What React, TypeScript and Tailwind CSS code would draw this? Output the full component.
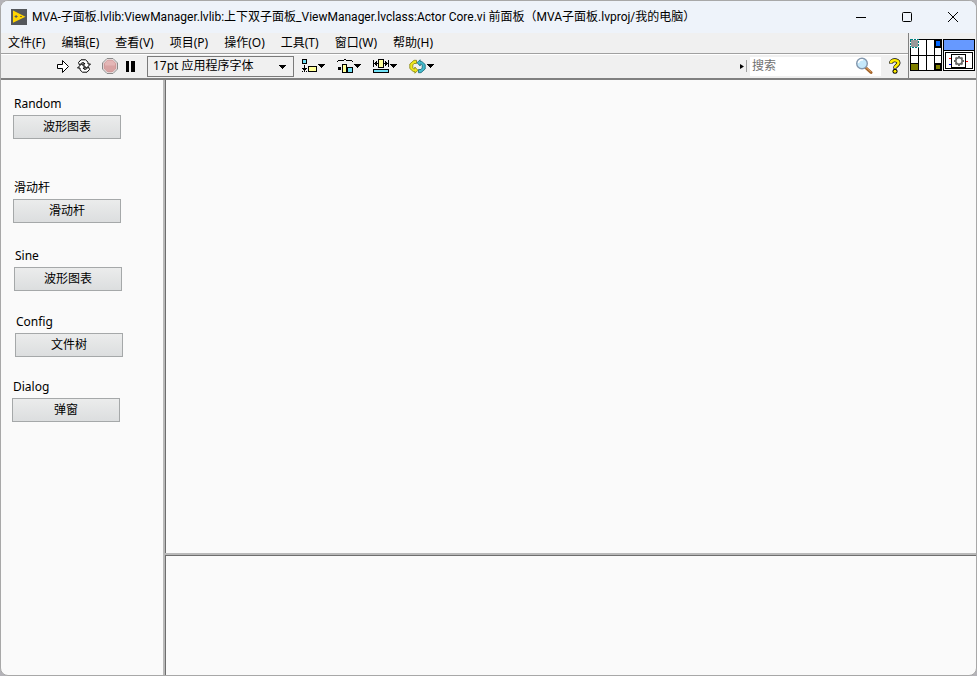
import React, { useState } from 'react';

const MENUS = ['文件(F)', '编辑(E)', '查看(V)', '项目(P)', '操作(O)', '工具(T)', '窗口(W)', '帮助(H)'];

const VIEWS = [
  { id: 'random', label: 'Random', action: '波形图表', place: 'ml-3 mt-4' },
  { id: 'slider', label: '滑动杆', action: '滑动杆', place: 'ml-3 mt-[41px]' },
  { id: 'sine', label: 'Sine', action: '波形图表', place: 'ml-[13px] mt-[25px]' },
  { id: 'config', label: 'Config', action: '文件树', place: 'ml-[14px] mt-[23px]' },
  { id: 'dialog', label: 'Dialog', action: '弹窗', place: 'ml-[11px] mt-[22px]' },
];

const Caret: React.FC = () => (
  <svg width="7" height="4" viewBox="0 0 7 4" shapeRendering="crispEdges">
    <path d="M0 0h7v1H6v1H5v1H4v1H3V3H2V2H1V1H0z" fill="#000" />
  </svg>
);

const AppIcon: React.FC = () => (
  <svg width="16" height="16" viewBox="0 0 16 16">
    <rect width="16" height="16" fill="#55585c" />
    <path d="M2 1.600L14.500 7.700L2 13.800z" fill="#ffd500" />
    <path d="M3.600 7.500h3M5.100 6v3" stroke="#55585c" strokeWidth="1" />
    <path d="M9 7.500h2" stroke="#8a7a20" strokeWidth="1" />
  </svg>
);

const RunIcon: React.FC = () => (
  <svg width="12" height="13" viewBox="0 0 12 13">
    <path d="M.5 4.500h5v-4l6 6-6 6v-4h-5z" fill="#fff" stroke="#000" />
  </svg>
);

const RunLoopIcon: React.FC = () => (
  <svg width="16" height="14" viewBox="0 0 16 14" strokeLinejoin="miter">
    <path d="M2.500 3.500L5 .8H9.500L12 3.200V5H14.500L10.500 9 6.500 5H9L8 3.800H6L3.500 6z" fill="#fff" stroke="#000" />
    <path d="M13.500 10.500L11 13.200H6.500L4 10.800V9H1.500L5.500 5 9.500 9H7L8 10.200H10L12.500 8z" fill="#fff" stroke="#000" />
  </svg>
);

const AbortIcon: React.FC = () => (
  <svg width="16" height="16" viewBox="0 0 16 16">
    <path d="M5 .5h6L15.500 5v6L11 15.500H5L.5 11V5z" fill="#f4f0f0" stroke="#8a8a8a" />
    <path d="M5.500 2h5L14 5.500v5L10.500 14h-5L2 10.500v-5z" fill="#d9a3a3" stroke="#c08c8c" strokeWidth=".6" />
    <path d="M5.500 2.500h5L13 5.500v2H3v-2z" fill="#e4b6b6" />
  </svg>
);

const PauseIcon: React.FC = () => (
  <svg width="9" height="11" viewBox="0 0 9 11" shapeRendering="crispEdges">
    <path d="M0 0h3v11H0zM5 0h4v11H5z" fill="#000" />
  </svg>
);

const AlignIcon: React.FC = () => (
  <svg width="15" height="14" viewBox="0 0 15 14" shapeRendering="crispEdges">
    <path d="M0 0h5v5H0z" fill="#000" />
    <path d="M1 1h3v3H1z" fill="#6fe0f5" />
    <path d="M2 6h1v4H2zM0 9h5v1H0zM1 10h3v1H1zM2 11h1v1H2zM0 12h1v1H0zM2 12h1v1H2zM4 12h1v1H4z" fill="#000" />
    <path d="M6 7h9v6H6z" fill="#000" />
    <path d="M7 8h7v4H7z" fill="#ffff99" />
  </svg>
);

const DistributeIcon: React.FC = () => (
  <svg width="16" height="14" viewBox="0 0 16 14" shapeRendering="crispEdges">
    <path d="M0 2h1v1H0zM1 1h6v1H1zM7 0h2v1H7zM9 1h6v1H9zM15 2h1v1h-1z" fill="#000" />
    <path d="M1 8h3v3H1zM5 5h5v9H5zM10 8h6v6h-6z" fill="#000" />
    <path d="M6 6h3v7H6z" fill="#ffff99" />
    <path d="M11 9h4v4h-4z" fill="#6fe0f5" />
  </svg>
);

const ResizeIcon: React.FC = () => (
  <svg width="16" height="14" viewBox="0 0 16 14" shapeRendering="crispEdges">
    <path d="M0 1h1v7H0zM15 1h1v7h-1zM1 4h4v1H1zM11 4h4v1h-4zM2 3h1v3H2zM3 2h1v5H3zM13 3h1v3h-1zM12 2h1v5h-1z" fill="#000" />
    <path d="M5 0h6v9H5zM0 9h16v5H0z" fill="#000" />
    <path d="M6 1h4v7H6z" fill="#ffff99" />
    <path d="M1 10h14v3H1z" fill="#6fe0f5" />
    <path d="M0 9h16v1H0z" fill="#f0f0f0" />
    <path d="M0 10h16v1H0z" fill="#000" />
  </svg>
);

const ReorderIcon: React.FC = () => (
  <svg width="17" height="15" viewBox="0 0 17 15">
    <path d="M7.500 1.300H5L.8 5v4.500l3.400 3h1.600v1.700L9 11.300 5.800 8v1.800H4.500L3.800 9V6L5 4.500h2.500z" fill="#efe81c" stroke="#85820f" strokeWidth=".8" />
    <path d="M9.500 13.700H12L16.200 10V5.500l-3.400-3h-1.600V.8L8 3.700 11.200 7V5.200h1.300l.7.800v3L12 10.500H9.500z" fill="#45bccd" stroke="#156575" strokeWidth=".8" />
  </svg>
);

const SearchIcon: React.FC = () => (
  <svg width="18" height="18" viewBox="0 0 18 18">
    <path d="M10.500 10.500l5.500 5" stroke="#a5652a" strokeWidth="3" strokeLinecap="round" />
    <path d="M10.500 10l5 4.500" stroke="#e0a060" strokeWidth="1" strokeLinecap="round" />
    <circle cx="7" cy="6.500" r="5.300" fill="#c5e8fa" stroke="#8497ad" strokeWidth="1.400" />
    <path d="M3.500 6a3.500 3.500 0 0 1 4.500-3" stroke="#fff" strokeWidth="1.500" fill="none" />
  </svg>
);

const HelpIcon: React.FC = () => (
  <svg width="12" height="16" viewBox="0 0 12 16">
    <path d="M2 5.400C2 1.400 9.500 1.200 9.500 5 9.500 7.400 6 7.400 6 10.500" fill="none" stroke="#000" strokeWidth="4" />
    <circle cx="6" cy="13.300" r="2.500" fill="#000" />
    <path d="M2 5C2 1.400 9.500 1.200 9.500 5 9.500 7.400 6 7.400 6 10" fill="none" stroke="#ffee00" strokeWidth="2.600" />
    <circle cx="6" cy="13.300" r="1.500" fill="#ffee00" />
  </svg>
);

const ConnectorPane: React.FC = () => (
  <svg width="32" height="32" viewBox="0 0 32 32" shapeRendering="crispEdges">
    <rect width="32" height="32" fill="#000" />
    <path d="M1 9h7v7H1zM1 17h7v7H1zM9 1h7v15H9zM9 17h7v14H9zM17 1h7v15h-7zM17 17h7v14h-7zM25 9h6v7h-6zM25 17h6v7h-6z" fill="#fff" />
    <rect width="9" height="9" fill="#fff" />
    <rect x="1" y="1" width="7" height="7" fill="#999" />
    <rect x=".5" y=".5" width="8" height="8" fill="none" stroke="#008080" strokeDasharray="2 1" />
    <rect x="26" y="2" width="4" height="5" fill="#0066ff" />
    <rect x="1" y="25" width="7" height="6" fill="#808000" />
    <rect x="26" y="26" width="4" height="4" fill="#808000" />
  </svg>
);

const ViIcon: React.FC = () => (
  <svg width="32" height="32" viewBox="0 0 32 32" shapeRendering="crispEdges">
    <rect width="32" height="32" fill="#000" />
    <rect x="1" y="1" width="30" height="10" fill="#6699ff" />
    <rect x="1" y="12" width="30" height="19" fill="#fff" />
    <rect x="2.500" y="13.500" width="27" height="16" fill="#fff" stroke="#000" />
    <rect x="8.500" y="15.500" width="14" height="13" fill="#fff" stroke="#000" />
    <path d="M6 19h2v1H6zM23 22h2v1h-2z" fill="#f00" />
    <path d="M6 25h2v1H6z" fill="#00f" />
    <g shapeRendering="auto" stroke="#666" fill="none">
      <circle cx="16" cy="22" r="3.200" strokeWidth="1.600" />
      <path d="M16 17v2M16 25v2M11 22h2M19 22h2M12.500 18.500l1.400 1.400M18.100 24.100l1.400 1.400M19.500 18.500l-1.400 1.400M13.900 24.100l-1.400 1.400" strokeWidth="1.900" />
    </g>
  </svg>
);

const App: React.FC = () => {
  const [query, setQuery] = useState('');

  return (
    <div className="min-h-screen bg-[#b4b3b8] flex">
      <div className="flex-1 flex flex-col overflow-hidden rounded-lg border border-[#a8a8a8] bg-[#fafafa] text-black text-[12px] leading-4 font-['Noto_Sans','Noto_Sans_CJK_SC',sans-serif]">
        {/* Title bar */}
        <header className="h-8 shrink-0 flex items-center bg-[#eef3fa]">
          <div className="pl-[10px] pr-[5px]"><AppIcon /></div>
          <h1 className="flex-1 truncate font-[Roboto,'Noto_Sans_CJK_SC',sans-serif]">
            MVA-子面板.lvlib:ViewManager.lvlib:上下双子面板_ViewManager.lvclass:Actor Core.vi 前面板（MVA子面板.lvproj/我的电脑）
          </h1>
          <button aria-label="最小化" className="w-[46px] h-8 flex items-center justify-center">
            <svg width="10" height="10" viewBox="0 0 10 10"><path d="M0 5.500h10" stroke="#000" /></svg>
          </button>
          <button aria-label="最大化" className="w-[46px] h-8 flex items-center justify-center">
            <svg width="10" height="10" viewBox="0 0 10 10"><rect x=".5" y=".5" width="9" height="9" rx="1" fill="none" stroke="#000" /></svg>
          </button>
          <button aria-label="关闭" className="w-[46px] h-8 flex items-center justify-center">
            <svg width="10" height="10" viewBox="0 0 10 10"><path d="M0 0l10 10M10 0L0 10" stroke="#000" /></svg>
          </button>
        </header>

        {/* Menu, toolbar and VI icon */}
        <div className="shrink-0 flex bg-[#f0f0f0] border-b-2 border-[#808080]">
          <div className="flex-1 min-w-0">
            <nav className="h-5 flex items-center gap-4 pl-[7px] pb-px whitespace-nowrap">
              {MENUS.map(m => <button key={m}>{m}</button>)}
            </nav>
            <div className="h-[25px] flex items-center border-t border-[#a0a0a0] shadow-[inset_0_1px_0_#fff] pl-14">
              <button aria-label="运行"><RunIcon /></button>
              <button aria-label="连续运行" className="ml-[7px]"><RunLoopIcon /></button>
              <button aria-label="中止执行" className="ml-[10px]"><AbortIcon /></button>
              <button aria-label="暂停" className="ml-2"><PauseIcon /></button>
              <div className="relative ml-3">
                <select aria-label="文本设置" className="block w-[147px] h-[21px] appearance-none border border-[#7a7a7a] bg-[#f0f0f0] pl-[5px] pr-5">
                  <option>17pt 应用程序字体</option>
                </select>
                <span className="absolute right-2 top-[9px] pointer-events-none"><Caret /></span>
              </div>
              <button aria-label="对齐对象" className="ml-2 flex items-center gap-px"><AlignIcon /><Caret /></button>
              <button aria-label="分布对象" className="ml-3 flex items-center gap-px"><DistributeIcon /><Caret /></button>
              <button aria-label="调整对象大小" className="ml-3 flex items-center gap-px"><ResizeIcon /><Caret /></button>
              <button aria-label="重新排序" className="ml-3 flex items-center gap-px"><ReorderIcon /><Caret /></button>

              <div className="ml-auto flex items-center">
                <svg width="4" height="5" viewBox="0 0 4 5"><path d="M0 0v5l4-2.500z" fill="#000" /></svg>
                <div className="w-px h-3 ml-[2px] mr-[3px] bg-[#a0a0a0]"></div>
                <label className="flex items-center w-[131px] h-[19px] bg-white pl-[2px] pr-2">
                  <input
                    aria-label="搜索"
                    placeholder="搜索"
                    value={query}
                    onChange={e => setQuery(e.target.value)}
                    className="flex-1 min-w-0 bg-transparent outline-none placeholder:text-[#707070]"
                  />
                  <SearchIcon />
                </label>
                <button aria-label="帮助" className="ml-2 mr-[7px]"><HelpIcon /></button>
              </div>
            </div>
          </div>
          <div className="flex items-start gap-px border-l border-[#808080] pl-px pr-px pt-[6px]">
            <ConnectorPane />
            <ViIcon />
          </div>
        </div>

        {/* Front panel */}
        <main className="flex-1 flex">
          <aside className="w-[162px] shrink-0 pb-4">
            {VIEWS.map(v => (
              <div key={v.id} className={`${v.place} w-[108px]`}>
                <label htmlFor={v.id} className="block pl-px mb-[3px]">{v.label}</label>
                <button id={v.id} className="block w-full h-6 border border-[#a5a8a9] bg-linear-to-b from-[#ebecec] to-[#dcdedf] active:to-[#cfd1d2]">
                  {v.action}
                </button>
              </div>
            ))}
          </aside>
          <div className="flex-1 flex flex-col border-l-2 border-[#b9b9b9]">
            <section aria-label="上子面板" className="flex-1 border-l border-[#6e6e6e]"></section>
            <div className="h-[3px] bg-[#b9b9b9] border-b border-[#6e6e6e]"></div>
            <section aria-label="下子面板" className="h-[119px] border-l border-[#6e6e6e]"></section>
          </div>
        </main>
      </div>
    </div>
  );
};

export default App;
